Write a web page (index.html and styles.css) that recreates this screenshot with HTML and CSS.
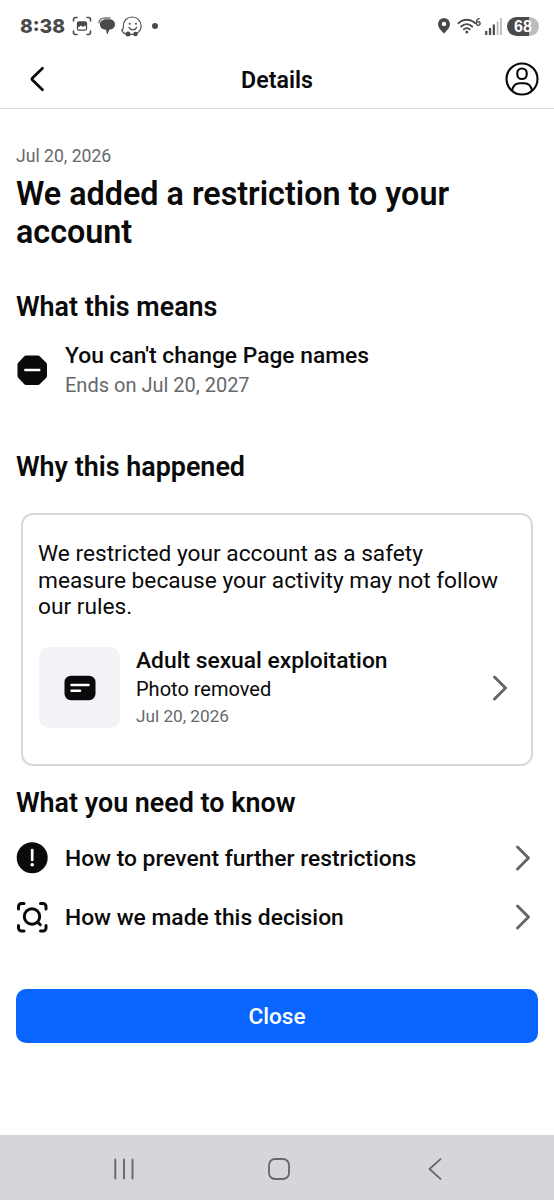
FILE: index.html
```html
<!DOCTYPE html>
<html lang="en">
<head>
    <meta charset="UTF-8">
    <meta name="viewport" content="width=device-width, initial-scale=1.0">
    <title>Details</title>
    <link rel="stylesheet" href="styles.css">
</head>
<body>
    <div class="status-bar">
        <span class="time">8:38</span>
        <svg class="capture-icon" width="20" height="20" viewBox="0 0 20 20">
            <path d="M1.500 5V3.500a2 2 0 0 1 2-2H5M15 1.500h1.500a2 2 0 0 1 2 2V5M18.500 15v1.500a2 2 0 0 1-2 2H15M5 18.500H3.500a2 2 0 0 1-2-2V15" fill="none" stroke="#4a4a4a" stroke-width="1.600" stroke-linecap="round"/>
            <rect x="5.500" y="5.800" width="9" height="8.400" rx="1.500" fill="none" stroke="#4a4a4a" stroke-width="1.300"/>
            <path d="M5.500 6h9v4.500l-1.500-1-2 1.500-2-1.500-2 1.500-1.500-.5z" fill="#4a4a4a"/>
        </svg>
        <svg class="chat-icon" width="18" height="18" viewBox="0 0 18 18">
            <path d="M.8 6.500C1 2.500 4 1 7.500 1h5" fill="none" stroke="#777" stroke-width="1.400"/>
            <path d="M8.500 2.200h2.500c3.500 0 6 2 6 5.100 0 3.200-2.300 5.200-5.700 5.500L9.700 16.800q-.5.500-.8 0L8 12.700C4.500 12.500 1.900 10.500 1.900 7.500S4.500 2.200 8.500 2.200z" fill="#4a4a4a"/>
        </svg>
        <svg class="smile-icon" width="21" height="21" viewBox="0 0 21 21">
            <path d="M15.500 17.500c3-1.700 4.600-4.300 4.600-7.500C20.100 5 16.200 1 11.200 1 6 1 2.400 4.800 2.400 9.700v1.800c0 1.500-.6 2.200-1.700 2.500.6 2 2.300 3.400 4.400 4M9 18.300h3.500" fill="none" stroke="#555" stroke-width="1.200" stroke-linecap="round"/>
            <circle cx="7" cy="18" r="2.500" fill="#4a4a4a"/>
            <circle cx="14.500" cy="18" r="2.300" fill="#4a4a4a"/>
            <circle cx="8.700" cy="7.800" r="1" fill="#4a4a4a"/>
            <circle cx="15" cy="7.800" r="1" fill="#4a4a4a"/>
            <path d="M8 11.300c1.300 3.300 6.300 3.300 7.600 0" fill="none" stroke="#555" stroke-width="1.200" stroke-linecap="round"/>
        </svg>
        <span class="dot"></span>
        <svg class="pin-icon" width="14" height="18" viewBox="0 0 14 18">
            <path d="M7 1a6 6 0 0 0-6 6c0 4 3.500 6.500 6 9.800 2.500-3.300 6-5.800 6-9.800a6 6 0 0 0-6-6zm0 3.700a2.200 2.200 0 1 1 0 4.400 2.200 2.200 0 0 1 0-4.400z" fill="#4a4a4a" fill-rule="evenodd"/>
        </svg>
        <svg class="wifi-icon" width="20" height="16" viewBox="0 0 20 16">
            <path d="M1.500 5.200c4.500-4.700 12-4.700 16.500 0M4.200 8.500c3-3.200 8-3.200 11 0M6.900 11.400c1.600-1.700 4.200-1.700 5.800 0" fill="none" stroke="#4a4a4a" stroke-width="1.900" stroke-linecap="round"/>
            <circle cx="9.800" cy="14" r="1.500" fill="#4a4a4a"/>
        </svg>
        <span class="wifi-gen">6</span>
        <svg class="signal-icon" width="17" height="17" viewBox="0 0 17 17">
            <path d="M1.200 13v4M5 10v7M8.800 6.500V17" stroke="#4a4a4a" stroke-width="2.200"/>
            <path d="M12.600 3.500V17M15.900 0v17" stroke="#bdbdbd" stroke-width="1.900"/>
        </svg>
        <span class="battery">68</span>
    </div>

    <header class="header">
        <svg width="16" height="26" viewBox="0 0 16 26">
            <path d="M13.500 2.200L3.200 12.200q-.8.800 0 1.600L13.500 23.800" fill="none" stroke="#080808" stroke-width="2.700" stroke-linecap="round"/>
        </svg>
        <h1 class="header-title">Details</h1>
        <svg width="34" height="34" viewBox="0 0 34 34" fill="none" stroke="#080808" stroke-width="2.100">
            <circle cx="17" cy="17" r="15.500"/>
            <rect x="12.300" y="6.500" width="9.400" height="10.500" rx="4.600"/>
            <path d="M7 28.500c1-4.500 4-7.300 7.500-7.300h5c3.500 0 6.500 2.800 7.500 7.300"/>
        </svg>
    </header>

    <main class="content">
        <p class="date">Jul 20, 2026</p>
        <h2 class="title">We added a restriction to your account</h2>

        <h3 class="section-title means">What this means</h3>
        <div class="restriction">
            <svg width="32" height="32" viewBox="0 0 32 32">
                <path d="M10 .5h12q1 0 1.700.7l6.600 6.600q.7.700.7 1.700V21q0 1-.7 1.700l-6.600 6.600q-.7.700-1.700.7H10q-1 0-1.700-.7L2.200 22.700Q1.500 22 1.500 21V9.500q0-1 .7-1.700L8.300 1.200Q9 .5 10 .5z" fill="#0a0a0a"/>
                <path d="M9.300 15h14" stroke="#fff" stroke-width="2.400" stroke-linecap="round"/>
            </svg>
            <div>
                <p class="item-title">You can't change Page names</p>
                <p class="item-sub">Ends on Jul 20, 2027</p>
            </div>
        </div>

        <h3 class="section-title why">Why this happened</h3>
        <div class="card">
            <p class="card-text">We restricted your account as a safety measure because your activity may not follow our rules.</p>
            <div class="violation">
                <div class="thumb">
                    <svg width="32" height="26" viewBox="0 0 32 26">
                        <rect x=".5" y=".7" width="31" height="24.500" rx="6.500" fill="#0a0a0a"/>
                        <path d="M7.500 10h17M7.500 15.800h8.500" stroke="#fff" stroke-width="2.500" stroke-linecap="round"/>
                    </svg>
                </div>
                <div class="violation-info">
                    <p class="item-title">Adult sexual exploitation</p>
                    <p class="violation-type">Photo removed</p>
                    <p class="violation-date">Jul 20, 2026</p>
                </div>
                <svg class="chevron" width="16" height="28" viewBox="0 0 16 28">
                    <path d="M2.500 3L13.500 14 2.500 25" />
                </svg>
            </div>
        </div>

        <h3 class="section-title know">What you need to know</h3>
        <div class="row">
            <svg width="32" height="32" viewBox="0 0 32 32">
                <circle cx="16.200" cy="15.700" r="15.500" fill="#0a0a0a"/>
                <path d="M16.200 8.200v9.700" stroke="#fff" stroke-width="2.700" stroke-linecap="round"/>
                <circle cx="16.200" cy="22.800" r="1.800" fill="#fff"/>
            </svg>
            <span class="row-label">How to prevent further restrictions</span>
            <svg class="chevron" width="16" height="28" viewBox="0 0 16 28">
                <path d="M2.500 3L13.500 14 2.500 25" />
            </svg>
        </div>
        <div class="row">
            <svg width="32" height="32" viewBox="0 0 32 32" fill="none" stroke="#0a0a0a" stroke-width="3" stroke-linecap="round">
                <path d="M2.500 8V5.500a3 3 0 0 1 3-3H8M24.500 2.500H27a3 3 0 0 1 3 3V8M30 24.500V27a3 3 0 0 1-3 3h-2.500M8 30H5.500a3 3 0 0 1-3-3v-2.500"/>
                <circle cx="16" cy="15.500" r="7.700"/>
                <path d="M21.500 21l2.800 2.800"/>
            </svg>
            <span class="row-label">How we made this decision</span>
            <svg class="chevron" width="16" height="28" viewBox="0 0 16 28">
                <path d="M2.500 3L13.500 14 2.500 25" />
            </svg>
        </div>

        <button class="close">Close</button>
    </main>

    <nav class="nav-bar">
        <svg width="22" height="22" viewBox="0 0 22 22">
            <path d="M2.300 1.500v19M11 1.500v19M19.500 1.500v19" stroke="#66686c" stroke-width="1.900" stroke-linecap="round"/>
        </svg>
        <svg class="nav-home" width="22" height="22" viewBox="0 0 22 22">
            <rect x="1" y="1" width="20" height="20" rx="6" fill="none" stroke="#66686c" stroke-width="1.800"/>
        </svg>
        <svg width="14" height="22" viewBox="0 0 14 22">
            <path d="M12.500 1.200L1.500 11l11 9.800" fill="none" stroke="#66686c" stroke-width="1.800" stroke-linecap="round" stroke-linejoin="round"/>
        </svg>
    </nav>
</body>
</html>
```
FILE: styles.css
```css
* {
    box-sizing: border-box;
}
body {
    margin: 0;
    height: 1200px;
    display: flex;
    flex-direction: column;
    font-family: Roboto, sans-serif;
    background-color: #fff;
    color: #0a0a0a;
}
h1, h2, h3, p {
    margin: 0;
}
svg {
    display: block;
    flex-shrink: 0;
}

/* Status bar */
.status-bar {
    height: 52px;
    padding: 0 15px 0 20px;
    display: flex;
    align-items: center;
    color: #4a4a4a;
}
.time {
    width: 52px;
    font-family: Inter, sans-serif;
    font-size: 19.300px;
    font-weight: 800;
}
.chat-icon {
    margin-left: 6px;
}
.smile-icon {
    margin-left: 5px;
}
.dot {
    width: 6px;
    height: 6px;
    margin-left: 10px;
    border-radius: 50%;
    background-color: #4a4a4a;
}
.pin-icon {
    margin-left: auto;
}
.wifi-icon {
    margin-left: 6px;
}
.wifi-gen {
    margin: -8px 4px 0 -2px;
    font-size: 10px;
    font-weight: 700;
}
.battery {
    width: 32px;
    height: 19px;
    margin-left: 5px;
    border-radius: 10px;
    background: linear-gradient(to right, #4a4a4a 68%, #bdbdbd 68%);
    color: #fff;
    font-family: "Liberation Sans", sans-serif;
    font-size: 16px;
    font-weight: 700;
    line-height: 19px;
    text-align: center;
}

/* Header */
.header {
    height: 57px;
    padding: 0 15px 2px 29px;
    display: grid;
    grid-template-columns: 34px 1fr 34px;
    align-items: center;
    border-bottom: 1px solid #dcdcdc;
}
.header-title {
    padding: 2px 14px 0 0;
    font-size: 23.200px;
    font-weight: 600;
    text-align: center;
}

/* Content */
.content {
    flex: 1;
    padding: 37px 16px 0;
}
.date {
    color: #65686c;
    font-size: 17.600px;
    line-height: 20px;
}
.title {
    margin-top: 9px;
    font-size: 32.300px;
    font-weight: 600;
    line-height: 38px;
}
.section-title {
    font-size: 26.900px;
    font-weight: 600;
    line-height: 32px;
}
.means {
    margin-top: 40px;
}
.restriction {
    margin-top: 18px;
    display: flex;
    align-items: center;
    gap: 17px;
}
.item-title {
    font-size: 22.800px;
    font-weight: 500;
    line-height: 29px;
}
.item-sub {
    color: #65686c;
    font-size: 20px;
    line-height: 30px;
}
.why {
    margin-top: 51px;
}
.card {
    height: 253px;
    margin: 30px 5px 0;
    padding: 26px 23px 0 15px;
    border: 2px solid #d6d8db;
    border-radius: 12px;
}
.card-text {
    padding-right: 8px;
    font-size: 22.700px;
    line-height: 26.700px;
}
.violation {
    margin: 25px 0 0 1px;
    display: flex;
    align-items: center;
}
.thumb {
    width: 81px;
    height: 81px;
    display: flex;
    align-items: center;
    justify-content: center;
    border-radius: 10px;
    background-color: #f2f3f7;
}
.violation-info {
    flex: 1;
    margin-left: 16px;
}
.violation-type {
    font-size: 20px;
    line-height: 28px;
}
.violation-date {
    color: #65686c;
    font-size: 17.200px;
    line-height: 26px;
}
.chevron path {
    fill: none;
    stroke: #65676b;
    stroke-width: 3;
    stroke-linecap: round;
    stroke-linejoin: round;
}
.know {
    margin-top: 21px;
    margin-bottom: 9px;
}
.row {
    height: 59px;
    padding-right: 7px;
    display: flex;
    align-items: center;
}
.row-label {
    flex: 1;
    margin-left: 17px;
    padding-top: 2px;
    font-size: 22.800px;
    font-weight: 500;
}
.close {
    display: block;
    width: 100%;
    height: 54px;
    margin-top: 43px;
    border: none;
    border-radius: 10px;
    background-color: #0866ff;
    color: #fff;
    font-family: inherit;
    font-size: 22.600px;
    font-weight: 500;
    cursor: pointer;
}

/* Android navigation */
.nav-bar {
    height: 65px;
    padding: 2px 112px 0 113px;
    display: flex;
    align-items: center;
    justify-content: space-between;
    background-color: #d5d6da;
}
.nav-home {
    margin-right: 5px;
}
```
